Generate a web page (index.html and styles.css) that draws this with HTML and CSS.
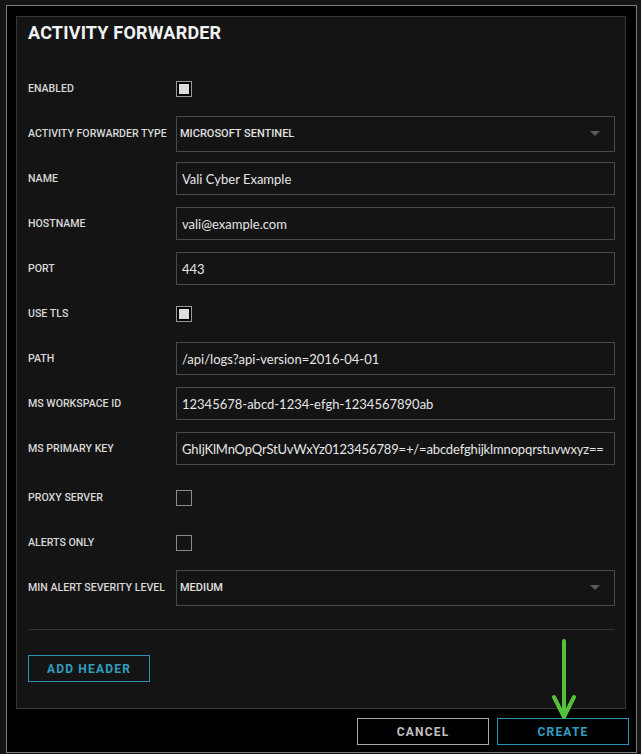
FILE: index.html
```html
<!DOCTYPE html>
<html lang="en">
<head>
    <meta charset="UTF-8">
    <meta name="viewport" content="width=device-width, initial-scale=1.0">
    <title>Activity Forwarder</title>
    <link rel="stylesheet" href="styles.css">
</head>
<body>

<div class="frame">
    <div class="panel">
        <h1 class="title">ACTIVITY FORWARDER</h1>

        <div class="row">
            <label>ENABLED</label>
            <span class="check checked"></span>
        </div>
        <div class="row">
            <label>ACTIVITY FORWARDER TYPE</label>
            <div class="select">
                <span>MICROSOFT SENTINEL</span>
                <svg width="10" height="6" viewBox="0 0 10 6"><path d="M0 0 L10 0 L5 5 Z" fill="#5a5a5a"/></svg>
            </div>
        </div>
        <div class="row">
            <label for="name">NAME</label>
            <input type="text" id="name" value="Vali Cyber Example">
        </div>
        <div class="row">
            <label for="hostname">HOSTNAME</label>
            <input type="text" id="hostname" value="vali@example.com">
        </div>
        <div class="row">
            <label for="port">PORT</label>
            <input type="text" id="port" value="443">
        </div>
        <div class="row">
            <label>USE TLS</label>
            <span class="check checked"></span>
        </div>
        <div class="row">
            <label for="path">PATH</label>
            <input type="text" id="path" value="/api/logs?api-version=2016-04-01">
        </div>
        <div class="row">
            <label for="workspace">MS WORKSPACE ID</label>
            <input type="text" id="workspace" value="12345678-abcd-1234-efgh-1234567890ab">
        </div>
        <div class="row">
            <label for="key">MS PRIMARY KEY</label>
            <input type="text" id="key" class="long" value="GhIjKlMnOpQrStUvWxYz0123456789=+/=abcdefghijklmnopqrstuvwxyz==">
        </div>
        <div class="row spaced">
            <label>PROXY SERVER</label>
            <span class="check"></span>
        </div>
        <div class="row">
            <label>ALERTS ONLY</label>
            <span class="check"></span>
        </div>
        <div class="row">
            <label>MIN ALERT SEVERITY LEVEL</label>
            <div class="select">
                <span>MEDIUM</span>
                <svg width="10" height="6" viewBox="0 0 10 6"><path d="M0 0 L10 0 L5 5 Z" fill="#5a5a5a"/></svg>
            </div>
        </div>

        <hr class="divider">

        <div>
            <button class="btn btn-blue add-header">ADD HEADER</button>
        </div>
    </div>

    <div class="footer">
        <button class="btn btn-grey">CANCEL</button>
        <button class="btn btn-blue">CREATE</button>
    </div>

    <!-- annotation arrow -->
    <svg class="arrow" width="30" height="84" viewBox="0 0 30 84">
        <path d="M15 3 L15 78" stroke="#55c13b" stroke-width="4" stroke-linecap="round" fill="none"/>
        <path d="M5 59 L15 79 L25 59" stroke="#55c13b" stroke-width="4" stroke-linecap="round" stroke-linejoin="round" fill="none"/>
    </svg>
</div>

</body>
</html>
```

FILE: styles.css
```css
body {
    margin: 0;
    background-color: #151515;
    font-family: Roboto, "Liberation Sans", sans-serif;
}
.frame {
    position: relative;
    margin: 5px 4px 0 6px;
    height: 746px;
    border: 1px solid #7a7a7a;
    background-color: #000;
    display: flex;
    flex-direction: column;
}
.panel {
    margin: 10px 10px 0 9px;
    height: 691px;
    border: 1px solid #363636;
    background-color: #141414;
    padding: 0 10px 0 11px;
    display: flex;
    flex-direction: column;
}
.title {
    margin: 0;
    height: 49px;
    padding-top: 5px;
    box-sizing: border-box;
    font-size: 18px;
    font-weight: 700;
    letter-spacing: 0.2px;
    color: #f2f2f2;
}
.row {
    display: grid;
    grid-template-columns: 148px 1fr;
    align-items: center;
    height: 45px;
}
.row.spaced {
    margin-top: 4px;
}
.row label {
    font-size: 10.6px;
    font-weight: 500;
    color: #d8d8d8;
    white-space: nowrap;
}
.row input[type="text"] {
    height: 33px;
    box-sizing: border-box;
    border: 1px solid #4a4a4a;
    background-color: #141414;
    color: #e6e6e6;
    padding: 0 5px;
    font-family: Lato, "Open Sans", sans-serif;
    font-size: 13px;
    outline: none;
    width: 100%;
}
.row input.long {
    letter-spacing: -0.15px;
}
.select {
    height: 36px;
    box-sizing: border-box;
    border: 1px solid #4a4a4a;
    display: flex;
    align-items: center;
    justify-content: space-between;
    padding: 0 14px 0 3px;
    font-size: 11px;
    font-weight: 500;
    color: #e0e0e0;
}
.check {
    width: 16px;
    height: 16px;
    box-sizing: border-box;
    border: 1px solid #8a8a8a;
}
.check.checked {
    border-color: #9a9a9a;
    background-color: #dcdcdc;
    box-shadow: inset 0 0 0 2px #000;
}
.divider {
    margin: 19px 0 0 0;
    border: none;
    border-top: 1px solid #333;
}
.add-header {
    margin-top: 25px;
    width: 122px;
}
.btn {
    height: 27px;
    box-sizing: border-box;
    background-color: transparent;
    font-family: Roboto, "Liberation Sans", sans-serif;
    font-size: 12px;
    font-weight: 700;
    letter-spacing: 1.2px;
    padding: 0;
    cursor: pointer;
}
.btn-blue {
    border: 1px solid #2a93ae;
    color: #2f9fc0;
}
.btn-grey {
    border: 1px solid #a8a8a8;
    color: #c0c0c0;
}
.footer {
    display: flex;
    justify-content: flex-end;
    gap: 8px;
    margin: 9px 7px 0 0;
}
.footer .btn {
    width: 132px;
}
.arrow {
    position: absolute;
    left: 542px;
    top: 632px;
}
```
